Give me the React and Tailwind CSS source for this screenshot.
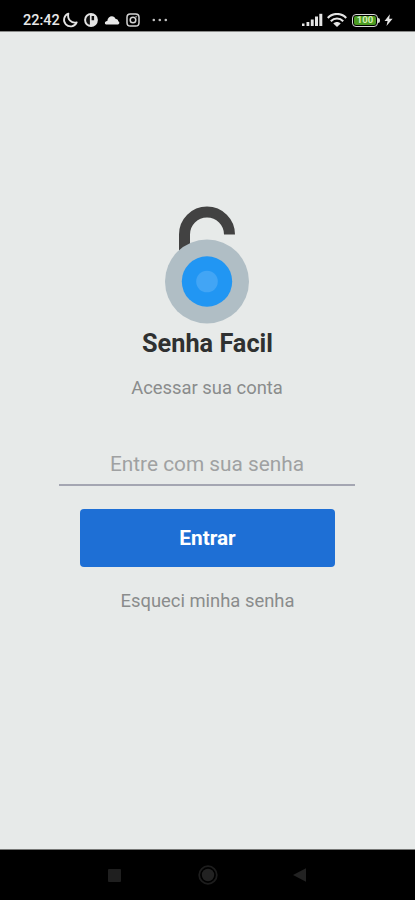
import React from 'react';

const SignalIcon = () => (
  <svg width="21" height="14" viewBox="0 0 21 14" fill="#e4e4e4">
    <rect x="0" y="10.5" width="2.5" height="2.5" />
    <rect x="4.5" y="9" width="2.8" height="4" />
    <rect x="8.8" y="6.5" width="2.9" height="6.5" />
    <rect x="13" y="3.5" width="3" height="9.5" />
    <rect x="17.3" y="0.8" width="3" height="12.2" />
  </svg>
);

const WifiIcon = () => (
  <svg width="20" height="14" viewBox="0 0 20 14" fill="none" stroke="#e4e4e4" strokeWidth="2.1">
    <path d="M.8 5C5.8-.4 14.2-.4 19.2 5" />
    <path d="M3.8 8.2c3.6-3.7 8.8-3.7 12.4 0" />
    <path d="M6.3 10.6c2.2-2 5.2-2 7.4 0L10 14z" fill="#e4e4e4" stroke="none" />
  </svg>
);

const BatteryIcon = () => (
  <div className="flex items-center">
    <div className="flex h-[13px] w-[26px] items-center justify-center rounded-[4px] border-[1.5px] border-[#d8d8d8] p-px">
      <span className="flex h-full w-full items-center justify-center rounded-[2px] bg-[#4c9b22] text-[9.5px] leading-none font-bold text-[#d4f0b4]">100</span>
    </div>
    <div className="h-[5px] w-[2px] rounded-r-sm bg-[#d8d8d8]" />
  </div>
);

const StatusBar = () => (
  <header className="flex h-8 items-center justify-between border-b border-[#8a8b8a] bg-black pt-[9px] pr-[22px] pl-[23px] text-[#e8e8e8]">
    <div className="flex items-center">
      <span className="w-[37px] text-[14.5px] leading-[15px] font-medium whitespace-nowrap">22:42</span>
      <svg className="ml-[2px]" width="16" height="16" viewBox="0 0 16 16" fill="none" stroke="#e4e4e4" strokeWidth="1.8" strokeLinejoin="round">
        <path d="M6.4 1.6A6.6 6.6 0 1 0 14.7 10.4C9.6 11.6 5 7.6 6.4 1.6z" />
      </svg>
      <svg className="ml-[6px]" width="14" height="14" viewBox="0 0 14 14">
        <circle cx="7" cy="7" r="6.9" fill="#e4e4e4" />
        <path d="M5.9 2.1v9.7C3.3 11.3 2 9.2 2.1 7 2.2 4.5 3.7 2.7 5.9 2.1zM7.6 2.9h2.5v4.3H7.6z" fill="#111" />
      </svg>
      <svg className="ml-[6px]" width="16" height="10" viewBox="0 0 15 10" fill="#e8e8e8">
        <path d="M1.6 9.4C-.4 9.2.1 5.9 2.8 6c.4-5.6 7-6.4 8.4-1.9 2.1-.1 2.5 1.3 2.4 2.2 1.7.3 1.5 2.8.1 3.1z" />
      </svg>
      <svg className="ml-[6px]" width="14" height="14" viewBox="0 0 14 14" fill="none" stroke="#d4d4d4" strokeWidth="1.5">
        <rect x="1" y="1" width="12" height="12" rx="3.3" />
        <circle cx="7" cy="7" r="2.8" />
        <circle cx="10.2" cy="3.7" r="0.5" strokeWidth="0.7" />
      </svg>
      <svg className="ml-[12px]" width="16" height="4" viewBox="0 0 16 4" fill="#c0c0c0">
        <circle cx="1.8" cy="2" r="1.3" />
        <circle cx="7.8" cy="2" r="1.3" />
        <circle cx="13.8" cy="2" r="1.3" />
      </svg>
    </div>
    <div className="flex items-center">
      <SignalIcon />
      <div className="ml-[4px]"><WifiIcon /></div>
      <div className="ml-[5px]"><BatteryIcon /></div>
      <svg className="ml-[4px]" width="9" height="12" viewBox="0 0 9 12" fill="#e4e4e4">
        <path d="M5.9.2L.5 6.9h3.1L2.5 11.9 8.6 4.8H5.2z" />
      </svg>
    </div>
  </header>
);

const LockLogo = () => (
  <svg className="mr-[2px]" width="84" height="118" viewBox="0 0 84 118">
    <path d="M19.5 50V28.5a22.5 22.5 0 0 1 45 0" fill="none" stroke="#424242" strokeWidth="11" />
    <circle cx="42" cy="75.5" r="42" fill="#b0bec5" />
    <circle cx="42" cy="75.5" r="25.2" fill="#2196f3" />
    <circle cx="42" cy="75.5" r="10.8" fill="#42a5f5" />
  </svg>
);

const NavBar = () => (
  <nav className="flex h-[51px] items-center justify-between border-t border-[#777877] bg-black pr-[109px] pl-[108px]">
    <div className="h-[13px] w-[13px] rounded-[1px] bg-[#1f1f1f]" />
    <svg className="ml-px" width="20" height="20" viewBox="0 0 20 20">
      <circle cx="10" cy="10" r="8.8" fill="none" stroke="#1d1d1d" strokeWidth="1.8" />
      <circle cx="10" cy="10" r="6.2" fill="#222" />
    </svg>
    <svg width="13" height="14" viewBox="0 0 13 14" fill="#222">
      <path d="M0 7L13 .3v13.4z" />
    </svg>
  </nav>
);

export default function App() {
  return (
    <div className="flex h-[900px] w-full flex-col bg-[#e7eae9] font-['Roboto',sans-serif]">
      <StatusBar />
      <main className="flex flex-1 flex-col items-center pt-[174px]">
        <LockLogo />
        <h1 className="mt-1 text-[25.3px] leading-8 font-bold text-[#2f3131]">Senha Facil</h1>
        <p className="mt-[16px] mr-px text-[18.4px] leading-6 text-[#8a8c8c]">Acessar sua conta</p>
        <input
          type="password"
          placeholder="Entre com sua senha"
          className="mt-[47px] mr-px h-[39px] w-[296px] border-b-2 border-[#a4a6b2] pb-[3px] text-center text-[20.8px] text-[#2f3131] outline-none placeholder:text-[#9fa1a2]"
        />
        <button className="mt-[23px] h-[58px] w-[255px] rounded-[4px] bg-[#1e6fd5] pt-[2px] text-[20.8px] font-bold text-white">
          Entrar
        </button>
        <a href="#" className="mt-[22px] text-[18.4px] leading-6 text-[#8a8c8c]">Esqueci minha senha</a>
      </main>
      <NavBar />
    </div>
  );
}
